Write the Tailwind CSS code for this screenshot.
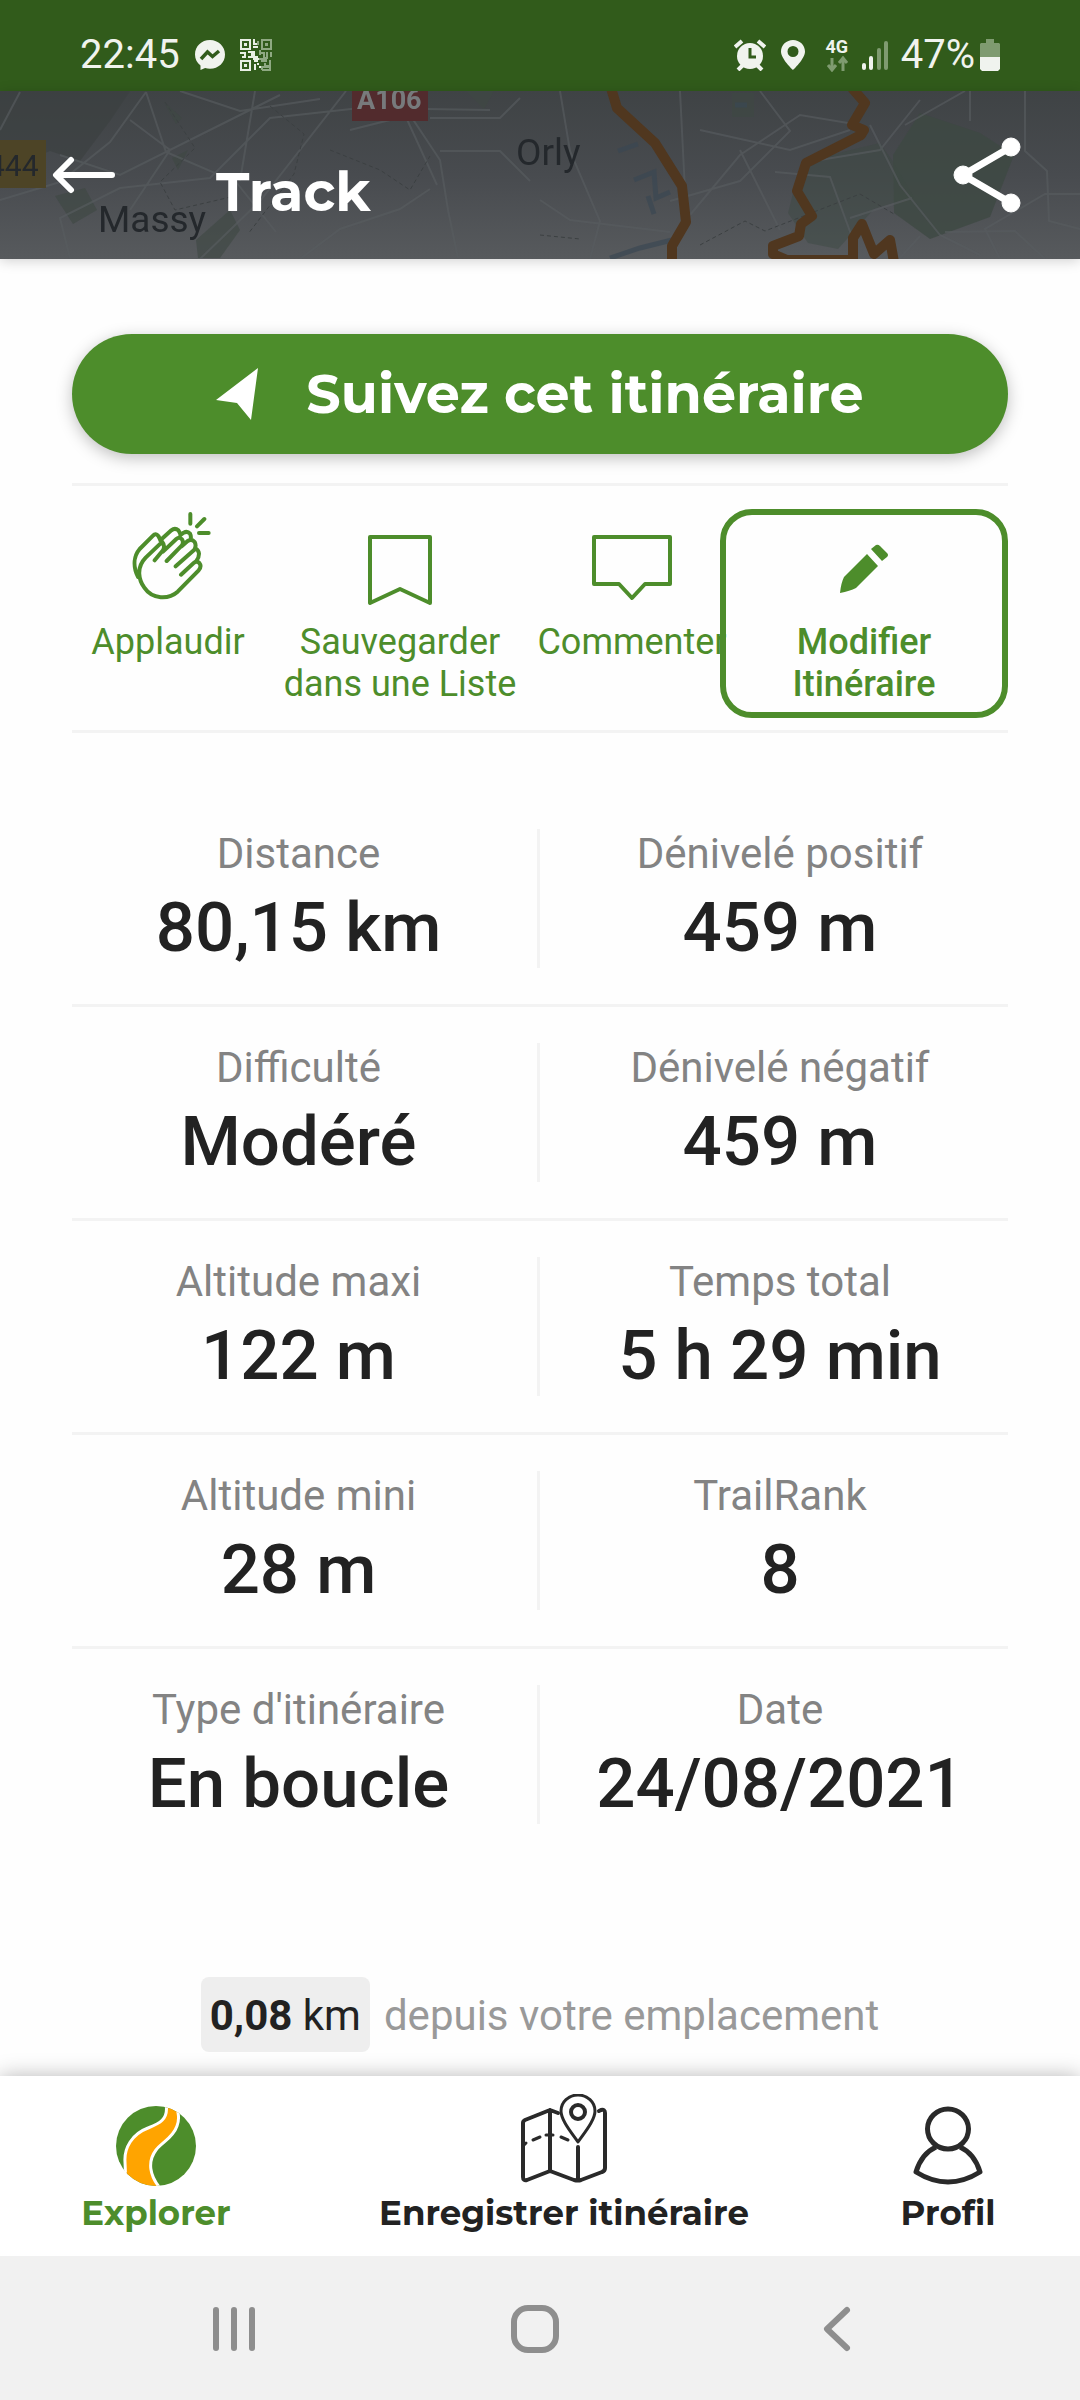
<!DOCTYPE html>
<html lang="fr">
<head>
<meta charset="utf-8">
<meta name="viewport" content="width=device-width, initial-scale=1">
<title>Track</title>
<script src="https://cdn.jsdelivr.net/npm/@tailwindcss/browser@4"></script>
</head>
<body class="flex min-h-screen flex-col bg-[#fefefe] font-['Roboto',sans-serif] text-[#222]">

<!-- Status bar -->
<div class="flex h-[91px] items-center bg-[#315b1b] px-20 pt-[18px] text-[40px] leading-none text-[#f0f3ee]">
  <span>22:45</span>
  <svg class="ml-[14px] size-8" viewBox="0 0 32 32" aria-hidden="true"><path fill="#f0f3ee" d="M16 1C7.500 1 1 7.300 1 15.600c0 4.600 2 8.300 5.500 11V31l4.600-2c1.500.500 3.200.800 4.900.800 8.500 0 15-6 15-14.200S24.500 1 16 1z"/><path d="M7 20l6.500-7 5 4.500L25 12" fill="none" stroke="#315b1b" stroke-width="3.500"/></svg>
  <svg class="ml-[14px] size-8" viewBox="0 0 32 32" aria-hidden="true">
    <g fill="none" stroke="#e9efe5" stroke-width="2"><path d="M1 1h9v9H1zM1 22h9v9H1z"/><path d="M14 0v5h3M13 8h5M0 14h5v4M8 13h4v5H8M14 12v6h4M2 18h4M14 22h4M15 25v6M19 28h3M13 20h6M18 24v2"/></g>
    <g fill="none" stroke="#8fa982" stroke-width="2"><path d="M22 1h9v9h-9zM18 2v4M20 14h4v6h-5M27 13v6h-3M31 13v5M20 11v5M21 22h5v-2M30 21v6h-5v-3M22 31v-3h8v3h-8"/></g>
    <path fill="#e9efe5" d="M4 4h3v3H4zM4 25h3v3H4z"/><path fill="#8fa982" d="M25 4h3v3h-3z"/>
  </svg>
  <div class="ml-auto flex items-center">
    <svg class="size-8" viewBox="0 0 32 32" aria-hidden="true"><g fill="none" stroke="#f0f3ee" stroke-width="4"><path d="M1 8l7-6M24 2l7 6M4 31l5-5M28 31l-5-5"/></g><circle cx="16" cy="17" r="13" fill="#f0f3ee"/><path d="M16 9v9h6" fill="none" stroke="#315b1b" stroke-width="3"/></svg>
    <svg class="ml-[15px] h-8 w-6" viewBox="0 0 24 32" aria-hidden="true"><path fill="#f0f3ee" fill-rule="evenodd" d="M12 1C5.500 1 0 6 0 12.500 0 20 12 31 12 31s12-11 12-18.500C24 6 18.500 1 12 1zm0 6a5.500 5.500 0 110 11 5.500 5.500 0 010-11z"/></svg>
    <span class="ml-5 flex flex-col items-center">
      <span class="text-[18px] leading-[18px] font-bold">4G</span>
      <svg class="h-4 w-6" viewBox="0 0 24 16" aria-hidden="true"><path d="M7 2v11M3 9l4 5 4-5M18 15V3M14 7l4-5 4 5" fill="none" stroke="#7f9b70" stroke-width="3"/></svg>
    </span>
    <svg class="ml-3 h-8 w-7" viewBox="0 0 28 32" aria-hidden="true"><g stroke-width="4" stroke-linecap="round"><path stroke="#f0f3ee" d="M3 26v3M10 19v10"/><path stroke="#7f9b70" d="M18 11v18M25 4v25"/></g></svg>
    <span class="ml-3">47%</span>
    <svg class="ml-[5px] h-8 w-5" viewBox="0 0 20 32" aria-hidden="true"><path fill="#7f9b70" d="M6 0h8v4h5l1 1v14H0V5l1-1h5z"/><path fill="#f0f3ee" d="M0 18h20v12l-2 2H2l-2-2z"/></svg>
  </div>
</div>

<!-- App bar over the dimmed map -->
<header class="relative h-[168px] overflow-hidden bg-[#4a4e52] shadow-[0_2px_12px_rgba(0,0,0,0.18)]">
  <svg class="absolute inset-0 size-full" viewBox="0 91 1080 168" preserveAspectRatio="xMidYMid slice" aria-hidden="true">
    <defs><linearGradient id="shade" x1="0" y1="0" x2="0" y2="1"><stop offset="0" stop-color="#3f4345"/><stop offset=".5" stop-color="#484b4f"/><stop offset="1" stop-color="#575a5d"/></linearGradient></defs>
    <path fill="url(#shade)" d="M0 91h1080v168H0z"/>
    <path fill="#3b403f" opacity=".6" d="M0 91h130l-20 30-30 40-30-10-50 20z"/>
    <g fill="#3e4943" opacity=".8">
      <path d="M920 113l60 20 34 22-24 62-60 22-36-26-1-58z"/>
      <path d="M830 155l50-12 14 20 20 34-40 12-36 40-30-6-20-30 10-40z" opacity=".6"/>
      <path d="M732 93h22v24h-22zM55 196l30-8 12 22-24 14zM196 240l34-30 10 20-20 28h-22zM466 91h28l-10 18zM164 102l18 16-6 6zM172 158l16-8-10 20z" opacity=".8"/>
    </g>
    <g fill="none" stroke="#3a4752" stroke-width="5" opacity=".7"><path d="M618 151l20-7M634 180l20-8 2 26 14-6M648 196l6 18M610 258l30-10 32-8M735 105h12"/></g>
    <g fill="none" stroke="#585c60" stroke-width="2" opacity=".65">
      <path d="M0 200l60-18 50-40 36-50M146 92l20 60 70 30 40 50M70 258l-10-40 60-30 90-10 60-60 90-10 130 2M255 91l-15 90M346 91l-86 110-60 58M60 155l60 20 110-55 50-25M0 130l20-38M130 120l40 30-40 60M350 130l60-15 30 45 8 50 10 48M430 118h70l20-20M405 115l32 70M440 151h60l30 30M300 259l40-30 60-20 30-20M180 91l60 20 80-12"/>
      <path d="M540 200l30 20 100 12M560 91l10 60 30 70-10 38M680 91l6 120M690 215l50-60 60-40 60 10M700 130l90 20 60-20M740 150l40 80M775 172l55 5 22 60-4 22M870 125l30 60 40 50 40 20M905 125l60-34M970 91v30M850 218l62-20M945 232l70-1 30 28M1025 91v60l22 20 2 50 31 8M1000 259l-15-30 60-35h35M920 236l-20 22M760 91l30 40-50 50-70 20M820 160l60-10 40-50"/>
    </g>
    <g fill="none" stroke="#3c4042" stroke-width="1" stroke-dasharray="4 3"><path d="M165 102l30 46-35 34 15 28 60-14M270 106l34 28-10 40-46 60M330 150l50 20 30 20 20-34M700 245l45-24 20 10 95-37 34 20M540 235l40 4"/></g>
    <g fill="none" stroke="#50371f" stroke-width="10" stroke-linejoin="round">
      <path d="M611 88l6 20 38 35 27 43 4 36-14 24v16"/>
      <path d="M852 88l13 15-13 22 12 5-3 5-55 28-9 28 15 25-11 8-2 12-26 10v8l14 6h66v-22l9-14 12 30 16-14 4 22"/>
    </g>
    <path fill="#522b2d" d="M352 91h76v30h-76z"/>
    <path fill="#4d4426" d="M0 140h46v48H0z"/>
    <g fill="#24282c" font-family="Roboto, sans-serif">
      <text x="357" y="109" font-size="27" font-weight="700" fill="#777a7c">A106</text>
      <text x="-12" y="176" font-size="30">444</text>
      <text x="98" y="232" font-size="37">Massy</text>
      <text x="516" y="165" font-size="37">Orly</text>
    </g>
  </svg>
  <div class="relative flex h-full items-center pr-[59px] pl-[52px]">
    <button type="button" aria-label="Retour"><svg class="h-10 w-16" viewBox="0 0 64 40" fill="none" stroke="#fff" stroke-width="6" stroke-linecap="round" stroke-linejoin="round"><path d="M60 20H5M19 5L4 20l15 15"/></svg></button>
    <h1 class="ml-[100px] pt-[34px] font-['Montserrat','Inter',sans-serif] text-[54px] leading-[64px] font-bold text-white">Track</h1>
    <button type="button" class="ml-auto" aria-label="Partager"><svg class="h-[76px] w-[68px]" viewBox="0 0 68 76" fill="#fff" stroke="#fff"><path d="M58 10L10 38l48 28" fill="none" stroke-width="7"/><circle cx="58" cy="10" r="9"/><circle cx="10" cy="38" r="9"/><circle cx="58" cy="66" r="9"/></svg></button>
  </div>
</header>

<main class="flex flex-1 flex-col px-[72px] pt-[75px]">
  <button type="button" class="flex h-[120px] items-center justify-center rounded-full bg-[#4d8d2b] font-['Montserrat','Inter',sans-serif] text-[54px] font-bold text-white shadow-[0_4px_16px_rgba(0,0,0,0.25)]">
    <svg class="mr-12 h-[52px] w-[42px]" viewBox="0 0 42 52" fill="#fff" aria-hidden="true"><path d="M42 0L0 32l21 3 14 17z"/></svg>
    Suivez cet itinéraire
  </button>

  <!-- Actions -->
  <div class="mt-[29px] grid h-[250px] grid-cols-[192fr_272fr_192fr_280fr] border-y-[3px] border-[#f3f3f3] pt-[23px] pb-3 text-[36px] leading-[42px] text-[#4d8d2b]">
    <button type="button" class="flex min-w-0 flex-col items-center">
      <span class="flex h-[112px] items-start pt-[3px] pl-1.5"><svg class="h-[88px] w-[79px]" viewBox="215 125 237 264" fill="none" stroke="#4d8d2b" stroke-width="12" stroke-linecap="round" stroke-linejoin="round"><path d="M233 320C216 285 222 255 238 236L278 196Q286 187 294 197L302 212M304 216L256 262C226 293 236 330 252 352C276 388 325 388 352 364L415 300Q425 288 417 278Q409 270 400 278L362 313M304 212Q316 226 308 240L283 270M300 210L333 180Q344 171 354 180L360 190M308 244L348 206Q357 198 365 207Q371 216 364 226L319 272M360 194L370 187Q381 181 389 190Q393 198 391 206M364 228L382 212Q394 204 403 215Q409 226 402 238L346 288M404 234Q415 238 416 250Q416 262 408 272M390 131V160M410 168L432 146M416 188H445"/></svg></span>
      Applaudir
    </button>
    <button type="button" class="flex min-w-0 flex-col items-center">
      <span class="flex h-[112px] items-start pt-[25px]"><svg class="h-[72px] w-16" viewBox="0 0 64 72" fill="none" stroke="#4d8d2b" stroke-width="4" stroke-linejoin="round"><path d="M2 3h60v66L32 55 2 69z"/></svg></span>
      Sauvegarder<br>dans une Liste
    </button>
    <button type="button" class="flex min-w-0 flex-col items-center">
      <span class="flex h-[112px] items-start pt-[25px]"><svg class="h-[68px] w-20" viewBox="0 0 80 68" fill="none" stroke="#4d8d2b" stroke-width="4" stroke-linejoin="round"><path d="M2 3h76v47H53L40 64 27 50H2z"/></svg></span>
      Commenter
    </button>
    <button type="button" class="-ml-2 flex h-[209px] min-w-0 flex-col items-center rounded-[32px] border-6 border-[#4d8d2b] font-medium">
      <span class="flex h-[106px] items-start pt-[29px]"><svg class="h-[49px] w-12" viewBox="0 0 48 49" fill="#4d8d2b"><path d="M27 10l11 12-22 22q-6 3-16 5 1-10 4-16zM31 5l5-4q2-1 4 1l7 7q2 2 0 4l-5 4z"/></svg></span>
      Modifier<br>Itinéraire
    </button>
  </div>

  <!-- Track figures -->
  <dl class="mt-[60px] grid grid-cols-2 text-center text-[42px] leading-[50px] text-[#838383] [&_dd]:pt-2 [&_dd]:text-[69px] [&_dd]:leading-[81px] [&_dd]:font-medium [&_dd]:text-[#222]">
    <div class="border-b-[3px] border-[#f3f3f3] py-9"><div class="border-r-[3px] border-[#f3f3f3] pr-3"><dt>Distance</dt><dd>80,15 km</dd></div></div>
    <div class="border-b-[3px] border-[#f3f3f3] py-9 pl-3"><dt>Dénivelé positif</dt><dd>459 m</dd></div>
    <div class="border-b-[3px] border-[#f3f3f3] py-9"><div class="border-r-[3px] border-[#f3f3f3] pr-3"><dt>Difficulté</dt><dd>Modéré</dd></div></div>
    <div class="border-b-[3px] border-[#f3f3f3] py-9 pl-3"><dt>Dénivelé négatif</dt><dd>459 m</dd></div>
    <div class="border-b-[3px] border-[#f3f3f3] py-9"><div class="border-r-[3px] border-[#f3f3f3] pr-3"><dt>Altitude maxi</dt><dd>122 m</dd></div></div>
    <div class="border-b-[3px] border-[#f3f3f3] py-9 pl-3"><dt>Temps total</dt><dd>5 h 29 min</dd></div>
    <div class="border-b-[3px] border-[#f3f3f3] py-9"><div class="border-r-[3px] border-[#f3f3f3] pr-3"><dt>Altitude mini</dt><dd>28 m</dd></div></div>
    <div class="border-b-[3px] border-[#f3f3f3] py-9 pl-3"><dt>TrailRank</dt><dd>8</dd></div>
    <div class="py-9"><div class="border-r-[3px] border-[#f3f3f3] pr-3"><dt>Type d'itinéraire</dt><dd>En boucle</dd></div></div>
    <div class="py-9 pl-3"><dt>Date</dt><dd>24/08/2021</dd></div>
  </dl>

  <p class="mt-auto mb-6 flex items-center justify-center gap-[14px] text-[42px] leading-[73px] text-[#999]">
    <span class="rounded-lg bg-[#eee] px-[9px] pt-0.5 text-[#222]"><b class="font-bold">0,08</b> km</span>
    <span class="pt-0.5">depuis votre emplacement</span>
  </p>
</main>

<!-- App tabs -->
<nav class="grid h-[180px] grid-cols-[312fr_504fr_264fr] bg-white pt-[18px] text-center font-['Montserrat','Inter',sans-serif] text-[34px] leading-[42px] font-bold shadow-[0_0_20px_rgba(0,0,0,0.28)]">
  <a href="#explorer" class="flex flex-col items-center text-[#4d8d2b]">
    <span class="flex h-[98px] items-start pt-3"><svg class="size-20" viewBox="0 0 80 80" aria-hidden="true"><clipPath id="disc"><circle cx="40" cy="40" r="40"/></clipPath><g clip-path="url(#disc)"><path fill="#4d8d2b" d="M0 0h80v80H0z"/><path fill="#ffa400" stroke="#fff" stroke-width="3" d="M50-2C53 14 42 18 32 22 16 28 8 42 9 56L10 82H44C34 70 31 56 40 44 46 36 57 32 61 20 64 12 62 6 60-2z"/></g><path d="M7.500 64L2 76" stroke="#fff" stroke-width="6"/></svg></span>
    Explorer
  </a>
  <a href="#enregistrer" class="flex flex-col items-center">
    <span class="flex h-[98px] items-start"><svg class="h-[92px] w-[92px]" viewBox="0 2 92 92" fill="none" stroke="#2a2a2a" stroke-width="4" stroke-linecap="round" stroke-linejoin="round" aria-hidden="true"><path d="M40 21l-8-3L7 28q-2 1-2 3v54q0 4 4 3l23-9 24 9q4 1 7 0l21-8q3-1 3-4V21q0-4-4-3l-2 1M32 18v61M60 55v33"/><path stroke-width="3" d="M60 50C53 40 43 28 43 19a17 16 0 0134 0c0 9-10 21-17 31z"/><circle cx="60" cy="20" r="7"/><path stroke-width="3" d="M6 53l2-2M15 48l7-3M28 43h7M43 45l7 3"/></svg></span>
    Enregistrer itinéraire
  </a>
  <a href="#profil" class="flex flex-col items-center">
    <span class="flex h-[98px] items-start pt-2"><svg class="h-[88px] w-[74px]" viewBox="0 -2 74 88" fill="none" stroke="#2a2a2a" stroke-width="5" stroke-linejoin="round" aria-hidden="true"><ellipse cx="37" cy="25" rx="20.500" ry="20"/><path d="M25 43C14 48 8 58 5 68q32 20 64 0C66 58 60 48 49 43"/></svg></span>
    Profil
  </a>
</nav>

<!-- System navigation -->
<div class="grid h-36 grid-cols-3 items-center bg-[#f1f1f1] pt-0.5 pr-[94px] pl-[84px] [&_button]:flex [&_button]:justify-center">
  <button type="button" aria-label="Applications récentes"><svg class="h-12 w-12" viewBox="0 0 48 48" stroke="#8e8e8e" stroke-width="6" stroke-linecap="round"><path d="M6 5v38M24 5v38M42 5v38"/></svg></button>
  <button type="button" aria-label="Accueil"><svg class="h-12 w-12" viewBox="0 0 48 48" fill="none" stroke="#8e8e8e" stroke-width="6"><rect x="3" y="3" width="42" height="42" rx="14"/></svg></button>
  <button type="button" aria-label="Précédent"><svg class="h-12 w-12" viewBox="0 0 48 48" fill="none" stroke="#8e8e8e" stroke-width="6" stroke-linecap="round" stroke-linejoin="round"><path d="M35 5L15 24l20 19"/></svg></button>
</div>
</body>
</html>
